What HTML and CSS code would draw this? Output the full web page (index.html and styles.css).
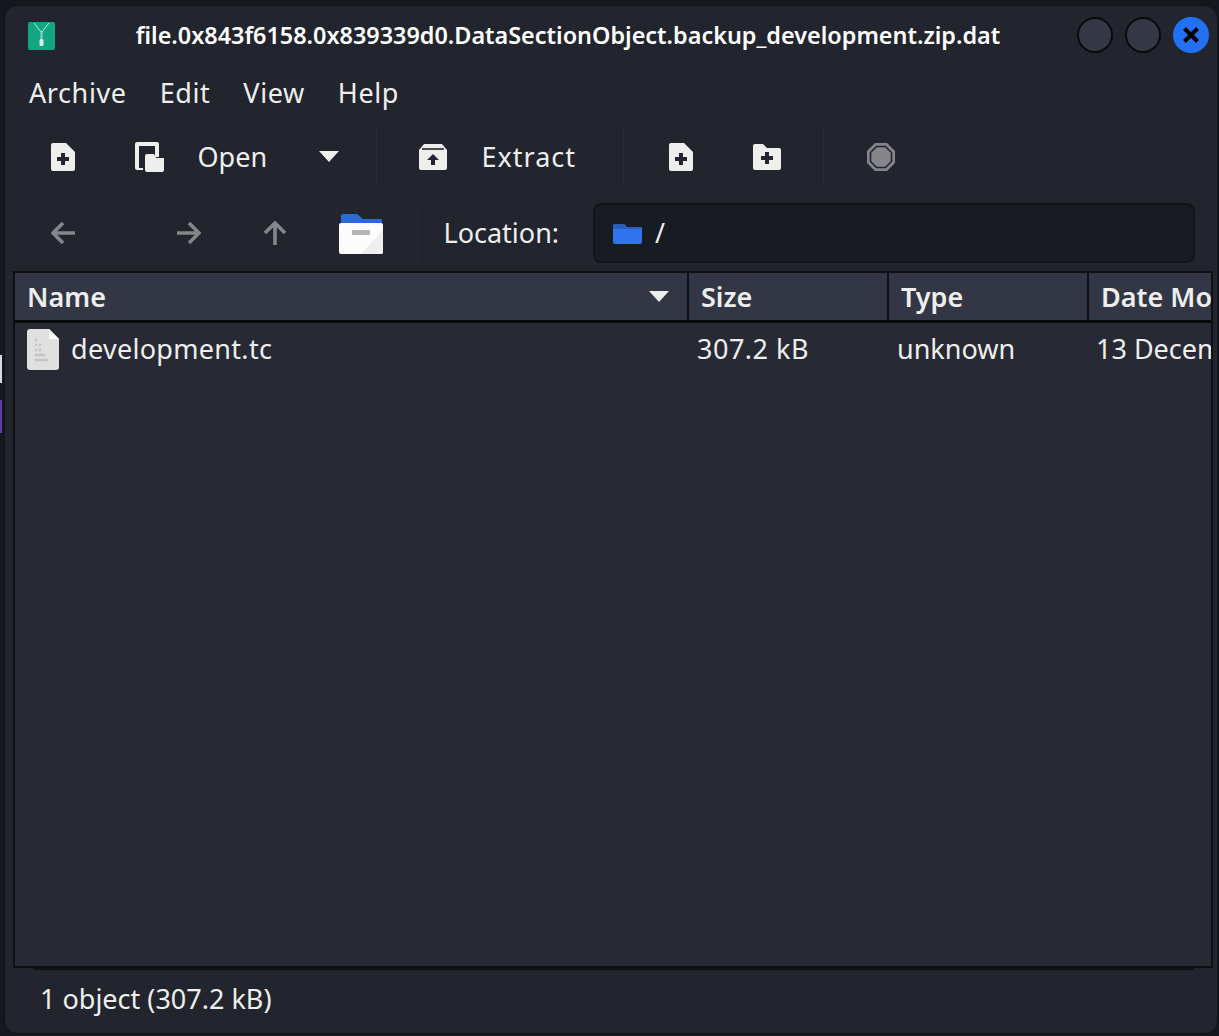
FILE: index.html
```html
<!DOCTYPE html>
<html>
<head>
<meta name="viewport" content="width=device-width, initial-scale=1">
<link rel="stylesheet" href="styles.css">
</head>
<body>

<div class="desktop">
  <span class="peek peek-light"></span>
  <span class="peek peek-purple"></span>
</div>

<div class="window">
  <div class="titlebar">
    <svg class="app-icon" width="27" height="28" viewBox="0 0 27 28">
      <rect width="27" height="28" rx="2" fill="#14a583"/>
      <path d="M6 1l7 9 1 0 7-9" fill="none" stroke="#bfe8dc" stroke-width="1"/>
      <path d="M13.5 10v9" stroke="#7fd6c0" stroke-width="2"/>
      <rect x="11.5" y="17" width="4" height="7" rx="1.5" fill="#d5f2ea"/>
    </svg>
    <div class="title">file.0x843f6158.0x839339d0.DataSectionObject.backup_development.zip.dat</div>
    <div class="win-buttons">
      <span class="win-btn"></span>
      <span class="win-btn"></span>
      <span class="win-btn win-close">
        <svg width="20" height="20" viewBox="0 0 20 20"><path d="M3.5 3.5l13 13M16.5 3.5l-13 13" stroke="#000" stroke-width="4" fill="none"/></svg>
      </span>
    </div>
  </div>

  <div class="menubar">
    <span class="menu-item">Archive</span>
    <span class="menu-item">Edit</span>
    <span class="menu-item">View</span>
    <span class="menu-item">Help</span>
  </div>

  <div class="toolbar">
    <div class="tool-group group-open">
      <svg class="tool-icon icon-new" width="24" height="28" viewBox="0 0 24 28">
        <path d="M2 0h13l9 9v17a2 2 0 0 1-2 2H2a2 2 0 0 1-2-2V2a2 2 0 0 1 2-2z" fill="#eeeeec"/>
        <path d="M10 10h4v4h4v4h-4v4h-4v-4H6v-4h4z" fill="#22252f"/>
      </svg>
      <svg class="tool-icon icon-open" width="29" height="30" viewBox="0 0 29 30">
        <path d="M2 0h20a2 2 0 0 1 2 2v13h-4V4H4v22h4v2H2a2 2 0 0 1-2-2V2a2 2 0 0 1 2-2z" fill="#eeeeec"/>
        <path d="M10 14a2 2 0 0 1 2-2h7l2 4h8v12a2 2 0 0 1-2 2H12a2 2 0 0 1-2-2z" fill="#eeeeec"/>
      </svg>
      <span class="tool-label label-open">Open</span>
      <svg class="caret" width="20" height="11" viewBox="0 0 20 11"><path d="M0 0h20L10 11z" fill="#eeeeec"/></svg>
    </div>
    <div class="tool-group group-extract">
      <svg class="tool-icon" width="28" height="26" viewBox="0 0 28 26">
        <path d="M5 0h18l5 6v18a2 2 0 0 1-2 2H2a2 2 0 0 1-2-2V6z" fill="#eeeeec"/>
        <path d="M3 5h22" stroke="#22252f" stroke-width="1.6"/>
        <path d="M14 10l6 6h-4v5h-4v-5H8z" fill="#22252f"/>
      </svg>
      <span class="tool-label label-extract">Extract</span>
    </div>
    <div class="tool-group group-add">
      <svg class="tool-icon" width="24" height="28" viewBox="0 0 24 28">
        <path d="M2 0h13l9 9v17a2 2 0 0 1-2 2H2a2 2 0 0 1-2-2V2a2 2 0 0 1 2-2z" fill="#eeeeec"/>
        <path d="M10 10h4v4h4v4h-4v4h-4v-4H6v-4h4z" fill="#22252f"/>
      </svg>
      <svg class="tool-icon icon-addfolder" width="28" height="26" viewBox="0 0 28 26">
        <path d="M2 0h8l4 4h12a2 2 0 0 1 2 2v18a2 2 0 0 1-2 2H2a2 2 0 0 1-2-2V2a2 2 0 0 1 2-2z" fill="#eeeeec"/>
        <path d="M12 8h4v4h4v4h-4v4h-4v-4H8v-4h4z" fill="#22252f"/>
      </svg>
    </div>
    <div class="tool-group group-stop">
      <svg class="tool-icon" width="28" height="28" viewBox="0 0 28 28">
        <path d="M8 0h12l8 8v12l-8 8H8l-8-8V8z" fill="#85858a"/>
        <path d="M9.5 3.5h9l6 6v9l-6 6h-9l-6-6v-9z" fill="none" stroke="#22252f" stroke-width="1.6"/>
      </svg>
    </div>
  </div>

  <div class="locationbar">
    <div class="nav-group">
      <svg class="nav-icon nav-back" width="24" height="24" viewBox="0 0 24 24"><path d="M12 2L2 12l10 10M2 12h22" fill="none" stroke="#85858a" stroke-width="3.6"/></svg>
      <svg class="nav-icon nav-forward" width="24" height="24" viewBox="0 0 24 24"><path d="M12 2l10 10-10 10M22 12H0" fill="none" stroke="#85858a" stroke-width="3.6"/></svg>
      <svg class="nav-icon nav-up" width="24" height="24" viewBox="0 0 24 24"><path d="M2 12L12 2l10 10M12 2v22" fill="none" stroke="#85858a" stroke-width="3.6"/></svg>
      <svg class="nav-home" width="44" height="41" viewBox="0 0 44 41">
        <path d="M2 12V3a2 2 0 0 1 2-2h14l6 5h18a1 1 0 0 1 1 1v7z" fill="#2a69d8"/>
        <rect y="10" width="44" height="31" rx="2" fill="#fcfcfc"/>
        <path d="M22 41l22-24v22a2 2 0 0 1-2 2z" fill="#eeeeee"/>
        <rect x="13" y="17" width="18" height="5" rx="1" fill="#b5b5b5"/>
      </svg>
    </div>
    <label class="location-label">Location:</label>
    <div class="location-entry">
      <svg class="entry-folder" width="29" height="21" viewBox="0 0 29 21">
        <path d="M0 3a2 2 0 0 1 2-2h9l3 3h13a2 2 0 0 1 2 2v13a2 2 0 0 1-2 2H2a2 2 0 0 1-2-2z" fill="#2f73ee"/>
        <path d="M0 3a2 2 0 0 1 2-2h9l3 3h15v2H0z" fill="#2a5fb8"/>
      </svg>
      <span class="entry-text">/</span>
    </div>
  </div>

  <div class="filelist">
    <div class="list-header">
      <div class="col col-name">Name
        <svg width="20" height="11" viewBox="0 0 20 11"><path d="M0 0h20L10 11z" fill="#eeeeec"/></svg>
      </div>
      <div class="col col-size">Size</div>
      <div class="col col-type">Type</div>
      <div class="col col-date">Date Modified</div>
    </div>
    <div class="list-row">
      <div class="cell cell-name">
        <svg class="file-icon" width="32" height="41" viewBox="0 0 32 41">
          <path d="M3 0h19l10 10v28a3 3 0 0 1-3 3H3a3 3 0 0 1-3-3V3a3 3 0 0 1 3-3z" fill="#e0e0e0"/>
          <path d="M22 0l10 10H22z" fill="#fafafa"/>
          <path d="M8 11h2M8 16h2M12 16h2M8 21h2M12 21h2M8 26h10M8 31h13" stroke="#c4c4c4" stroke-width="2.4"/>
        </svg>
        <span class="file-name">development.tc</span>
      </div>
      <div class="cell cell-size">307.2 kB</div>
      <div class="cell cell-type">unknown</div>
      <div class="cell cell-date">13 December 2019</div>
    </div>
  </div>

  <div class="statusbar">1 object (307.2 kB)</div>
</div>

</body>
</html>
```

FILE: styles.css
```css
* {
  box-sizing: border-box;
}

html, body {
  height: 100%;
}

body {
  margin: 0;
  background: #16171c;
  font-family: "Noto Sans", sans-serif;
  color: #eeeeec;
  overflow: hidden;
  padding: 5px 1px 2px 4px;
}

.desktop .peek {
  position: absolute;
  left: 0;
  width: 2px;
}

.peek-light {
  top: 355px;
  height: 28px;
  background: #d8d8d8;
}

.peek-purple {
  top: 400px;
  height: 33px;
  background: #5b3fb0;
}

.window {
  height: 100%;
  background: #22252e;
  border-radius: 13px;
  display: flex;
  flex-direction: column;
  border: 1px solid #111217;
}

.titlebar {
  height: 62px;
  flex: none;
  display: flex;
  align-items: center;
  padding: 0 8px 0 23px;
}

.app-icon {
  flex: none;
  margin-top: -2px;
}

.title {
  flex: 1;
  text-align: center;
  font-size: 23.4px;
  font-weight: 600;
  color: #ffffff;
  white-space: nowrap;
  margin-top: -4px;
  padding-left: 4px;
}

.win-buttons {
  display: flex;
  gap: 12px;
  margin-top: -4px;
}

.win-btn {
  width: 36px;
  height: 36px;
  border-radius: 50%;
  background: #353946;
  border: 2px solid #0b0b0e;
  display: flex;
  align-items: center;
  justify-content: center;
}

.win-close {
  background: #2271f2;
  border-color: #2271f2;
}

.menubar {
  height: 50px;
  flex: none;
  display: flex;
  align-items: center;
  gap: 33px;
  margin-left: 8px;
  padding-left: 16px;
  border-bottom: 1px solid #262933;
  font-size: 27px;
  letter-spacing: 0.6px;
}

.toolbar {
  height: 77px;
  flex: none;
  display: flex;
  align-items: center;
}

.tool-group {
  height: 60px;
  display: flex;
  align-items: center;
  border-right: 1px solid #282b36;
}

.group-open {
  width: 372px;
  padding-left: 46px;
}

.icon-open {
  margin-left: 60px;
}

.tool-label {
  font-size: 27px;
}

.label-open {
  margin-left: 33.5px;
}

.caret {
  margin-left: 52px;
}

.group-extract {
  width: 247px;
  padding-left: 42px;
}

.label-extract {
  margin-left: 34.5px;
  letter-spacing: 1px;
}

.group-add {
  width: 200px;
  padding-left: 45px;
}

.icon-addfolder {
  margin-left: 60px;
}

.group-stop {
  border-right: none;
  padding-left: 43px;
}

.locationbar {
  height: 76px;
  flex: none;
  display: flex;
  align-items: center;
}

.nav-group {
  width: 413px;
  height: 60px;
  display: flex;
  align-items: center;
  border-right: 1px solid #282b36;
  padding-left: 46px;
}

.nav-forward {
  margin-left: 102px;
}

.nav-up {
  margin-left: 62px;
}

.nav-home {
  margin-left: 52px;
}

.location-label {
  font-size: 27px;
  margin: -2px 0 0 25.5px;
  width: 149.5px;
}

.location-entry {
  flex: 1;
  height: 60px;
  margin-right: 22px;
  background: #191b22;
  border: 2px solid #131419;
  border-radius: 8px;
  display: flex;
  align-items: center;
  padding-left: 18px;
  font-size: 27px;
}

.entry-text {
  margin: -2px 0 0 13px;
}

.filelist {
  flex: 1;
  min-height: 0;
  margin: 0 4px 0 8px;
  background: #272a35;
  border: 2px solid #0f1014;
  overflow: hidden;
}

.list-header {
  height: 50px;
  display: flex;
  background: #333644;
  border-bottom: 3px solid #08090b;
  font-size: 27px;
  font-weight: 600;
  white-space: nowrap;
}

.col {
  padding-left: 12px;
  display: flex;
  align-items: center;
  border-right: 2px solid #0f1014;
  flex: none;
}

.col-name {
  width: 674px;
  justify-content: space-between;
  padding-right: 18px;
}

.col-size,
.col-type {
  width: 200px;
}

.col-date {
  border-right: none;
}

.list-row {
  display: flex;
  height: 50px;
  align-items: center;
  font-size: 27px;
  white-space: nowrap;
}

.cell {
  flex: none;
  padding-left: 8px;
}

.cell-name {
  width: 674px;
  display: flex;
  align-items: center;
  padding-left: 12px;
}

.file-icon {
  margin: 2px 12px 0 0;
}

.file-name {
  letter-spacing: 0.3px;
}

.cell-size {
  width: 200px;
  letter-spacing: 0.5px;
}

.cell-type {
  width: 199px;
}

.statusbar {
  height: 65px;
  flex: none;
  display: flex;
  align-items: center;
  margin: 0 23px 0 28px;
  padding: 0 0 7px 7px;
  border-top: 2px solid #111217;
  font-size: 27px;
}
```
